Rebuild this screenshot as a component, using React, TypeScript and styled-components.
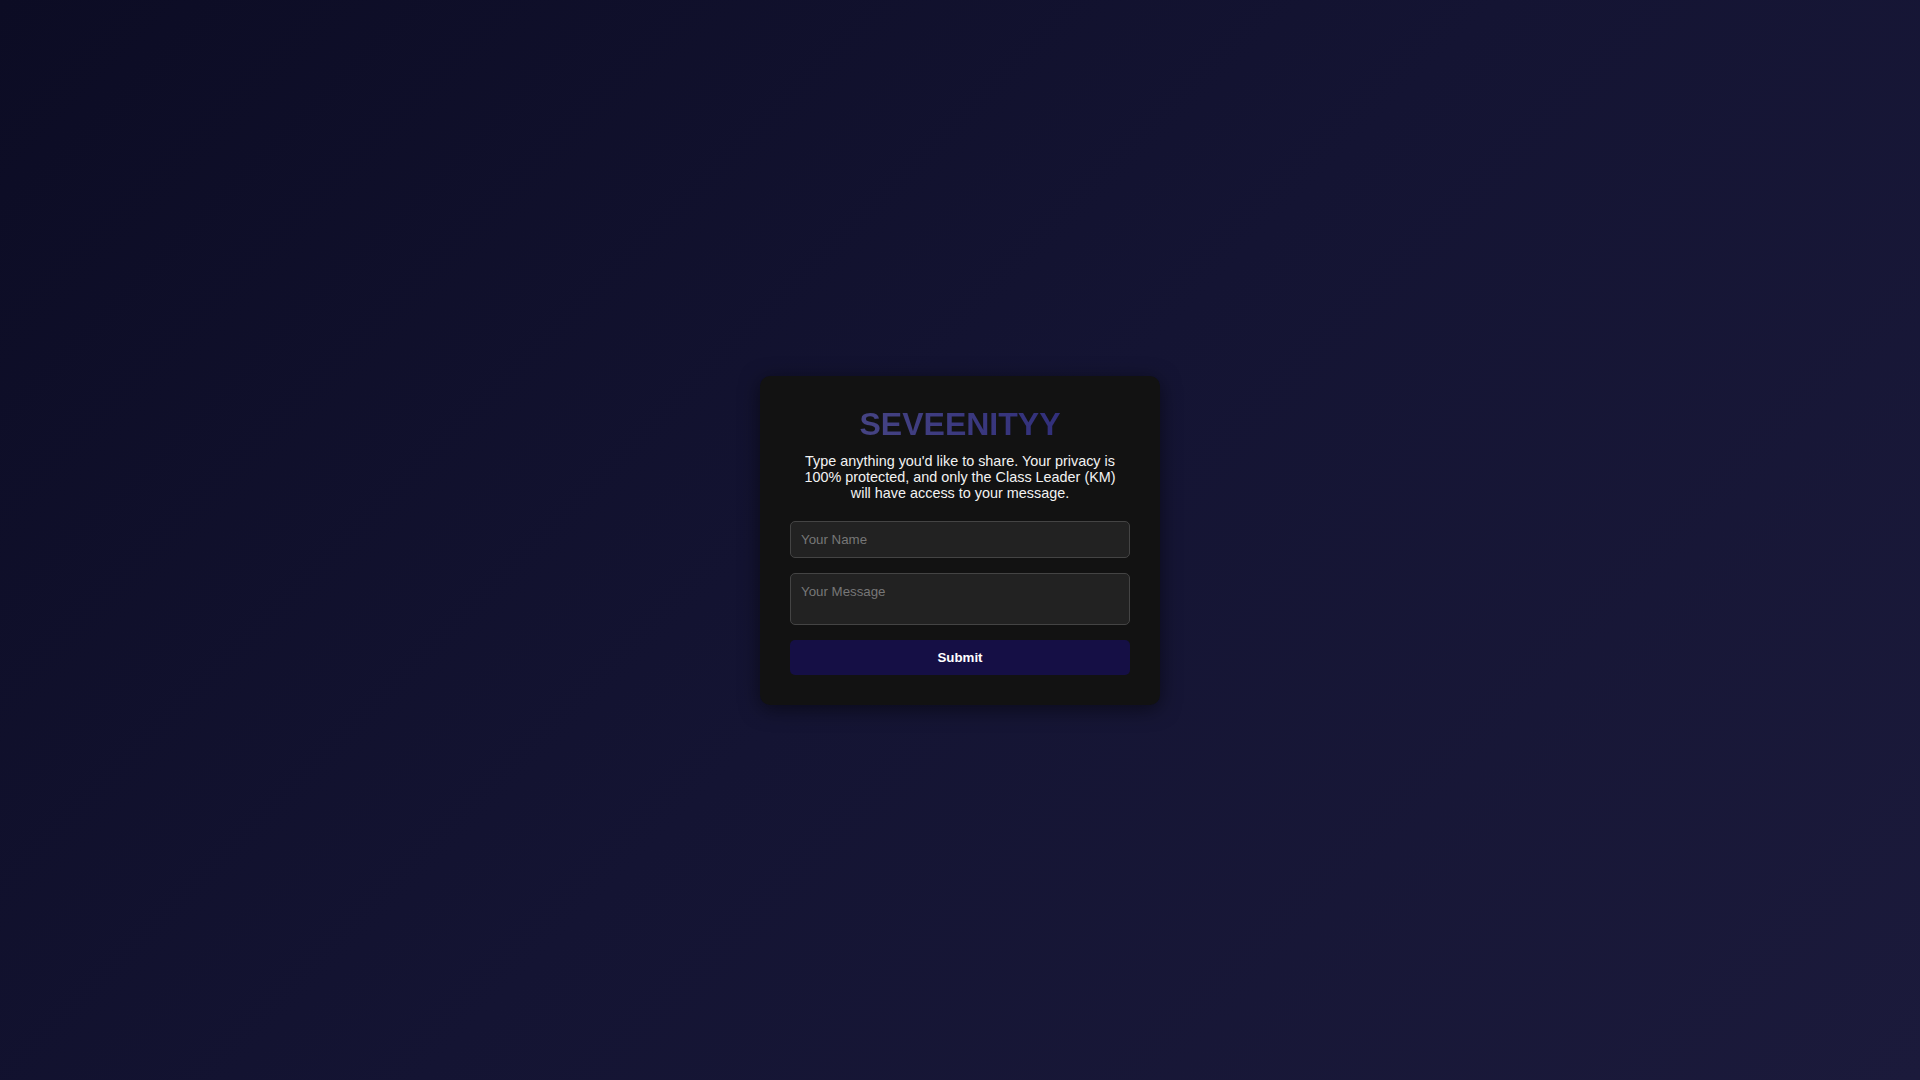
import styled, { createGlobalStyle } from 'styled-components';

const GlobalStyle = createGlobalStyle`
	* {
		box-sizing: border-box;
	}
	html,
	body {
		margin: 0;
		padding: 0;
		height: 100%;
	}
	body {
		font-family: 'Liberation Sans', Arial, sans-serif;
		background: linear-gradient(135deg, #0c0c24 0%, #141433 50%, #1b1a3b 100%);
		color: #fff;
	}
	#root {
		height: 100%;
	}
`;

const StyledPage = styled.main`
	height: 100vh;
	display: flex;
	align-items: center;
	justify-content: center;
`;

const StyledCard = styled.section`
	width: 400px;
	padding: 30px;
	background: #121212;
	border-radius: 10px;
	box-shadow: 0 4px 20px rgba(0, 0, 0, 0.5);
	text-align: center;
`;

const StyledTitle = styled.h1`
	margin: 0 0 10px;
	font-size: 32px;
	font-weight: 700;
	background: linear-gradient(90deg, #4c4a86, #2b2978);
	-webkit-background-clip: text;
	background-clip: text;
	color: transparent;
`;

const StyledParagraph = styled.p`
	margin: 0 0 20px;
	padding: 0 10px;
	font-size: 14.4px;
	line-height: 16px;
	color: #f2f2f2;
`;

const StyledForm = styled.form`
	display: flex;
	flex-direction: column;
`;

const fieldStyles = `
	width: 100%;
	padding: 10px;
	border: 1px solid #444;
	border-radius: 5px;
	background: #222;
	color: #fff;
	font-family: 'Liberation Sans', Arial, sans-serif;
	font-size: 13.3px;
	outline: none;
	&::placeholder {
		color: #777;
	}
`;

const StyledInput = styled.input`
	${fieldStyles}
	height: 37px;
	margin-bottom: 15px;
`;

const StyledTextArea = styled.textarea`
	${fieldStyles}
	height: 52px;
	margin-bottom: 15px;
	resize: none;
	display: block;
`;

const StyledButton = styled.button`
	height: 35px;
	border: none;
	border-radius: 5px;
	background: #150f45;
	color: #fff;
	font-family: 'Liberation Sans', Arial, sans-serif;
	font-size: 13.3px;
	font-weight: 700;
	cursor: pointer;
`;

export default function App() {
	return (
		<>
			<GlobalStyle />
			<StyledPage>
				<StyledCard>
					<StyledTitle>SEVEENITYY</StyledTitle>
					<StyledParagraph>
						Type anything you'd like to share. Your privacy is 100% protected,
						and only the Class Leader (KM) will have access to your message.
					</StyledParagraph>
					<StyledForm onSubmit={(e) => e.preventDefault()}>
						<StyledInput type='text' placeholder='Your Name' />
						<StyledTextArea placeholder='Your Message' />
						<StyledButton type='submit'>Submit</StyledButton>
					</StyledForm>
				</StyledCard>
			</StyledPage>
		</>
	);
}
